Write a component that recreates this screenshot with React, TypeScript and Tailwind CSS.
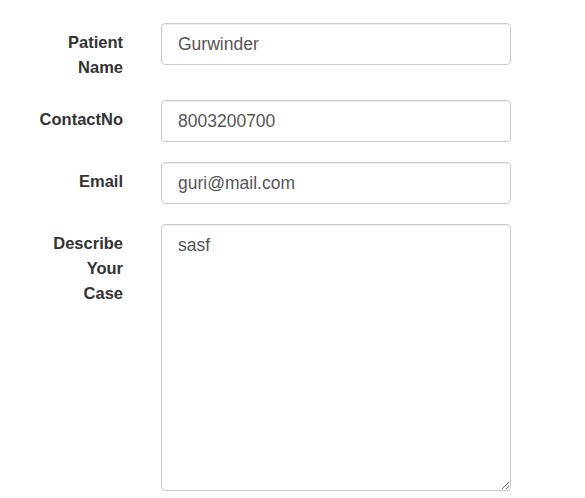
import React from "react";

const inputCls =
  "block w-[350px] h-[42px] px-4 font-[inherit] text-[17.5px] text-[#555] bg-white border border-[#ccc] rounded-[4px] shadow-[inset_0_1px_1px_rgba(0,0,0,0.075)] outline-none";

function Row({ label, children }: { label: React.ReactNode; children: React.ReactNode }) {
  return (
    <div className="flex items-start mb-[20px]">
      <label className="w-[123px] pl-[33px] pt-[7px] text-right text-[16.5px] leading-[25px] font-bold text-[#333] shrink-0">
        {label}
      </label>
      <div className="ml-[38px]">{children}</div>
    </div>
  );
}

export default function App() {
  return (
    <div className="w-[585px] h-[498px] bg-white pt-[23px] overflow-hidden font-['Liberation_Sans',Arial,sans-serif]">
      <Row label="Patient Name">
        <input className={inputCls} defaultValue="Gurwinder" />
      </Row>
      <Row label="ContactNo">
        <input className={inputCls} defaultValue="8003200700" />
      </Row>
      <Row label="Email">
        <input className={inputCls} defaultValue="guri@mail.com" />
      </Row>
      <Row
        label={
          <>
            Describe
            <br />
            Your
            <br />
            Case
          </>
        }
      >
        <textarea
          className="block w-[350px] h-[267px] px-4 py-[8px] font-[inherit] text-[17.5px] leading-[24px] text-[#555] bg-white border border-[#ccc] rounded-[4px] shadow-[inset_0_1px_1px_rgba(0,0,0,0.075)] outline-none resize"
          defaultValue="sasf"
        />
      </Row>
    </div>
  );
}
